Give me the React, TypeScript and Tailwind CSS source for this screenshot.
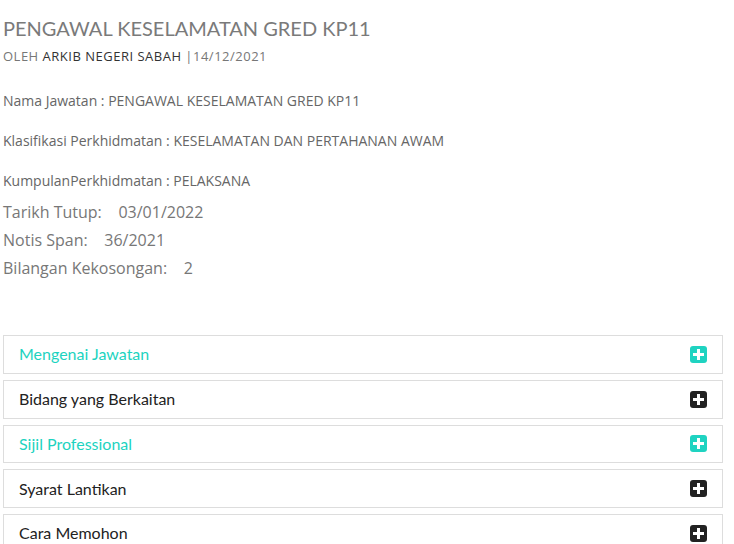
import React from "react";

const sections = [
  { title: "Mengenai Jawatan", active: true },
  { title: "Bidang yang Berkaitan", active: false },
  { title: "Sijil Professional", active: true },
  { title: "Syarat Lantikan", active: false },
  { title: "Cara Memohon", active: false },
];

function PlusBox({ active }: { active: boolean }) {
  return (
    <svg width="17" height="17" viewBox="0 0 17 17">
      <rect width="17" height="17" rx="3" fill={active ? "#1fd3c1" : "#222222"} />
      <rect x="7" y="3" width="3" height="11" fill="#fff" />
      <rect x="3" y="7" width="11" height="3" fill="#fff" />
    </svg>
  );
}

export default function App() {
  return (
    <div className="w-[734px] h-[544px] overflow-hidden bg-white px-[3px] pt-[16px] font-['Open_Sans',sans-serif]">
      <h1 className="font-['Lato',sans-serif] text-[20px] leading-[24px] text-[#7a7a7a]">
        PENGAWAL KESELAMATAN GRED KP11
      </h1>
      <div className="mt-[7px] text-[13px] leading-[18px] tracking-[0.5px] text-[#777]">
        OLEH <span className="text-[#333]">ARKIB NEGERI SABAH</span> |14/12/2021
      </div>

      <div className="mt-[26px] flex flex-col gap-[20px] text-[14px] leading-[20px] text-[#666]">
        <p>Nama Jawatan : PENGAWAL KESELAMATAN GRED KP11</p>
        <p>Klasifikasi Perkhidmatan : KESELAMATAN DAN PERTAHANAN AWAM</p>
        <p>KumpulanPerkhidmatan : PELAKSANA</p>
      </div>

      <div className="mt-[7px] text-[16px] leading-[28px] text-[#777]">
        <p>Tarikh Tutup:&nbsp;&nbsp;&nbsp; 03/01/2022</p>
        <p>Notis Span:&nbsp;&nbsp;&nbsp; 36/2021</p>
        <p>Bilangan Kekosongan:&nbsp;&nbsp;&nbsp; 2</p>
      </div>

      <div className="mt-[53px] w-[720px] flex flex-col gap-[6px] font-['Lato',sans-serif]">
        {sections.map((s) => (
          <div
            key={s.title}
            className="h-[38.75px] border border-[#dddddd] bg-white flex items-center justify-between pl-[15px] pr-[15px]"
          >
            <span className={`text-[16px] ${s.active ? "text-[#1dd3c0]" : "text-[#222]"}`}>
              {s.title}
            </span>
            <PlusBox active={s.active} />
          </div>
        ))}
      </div>
    </div>
  );
}
